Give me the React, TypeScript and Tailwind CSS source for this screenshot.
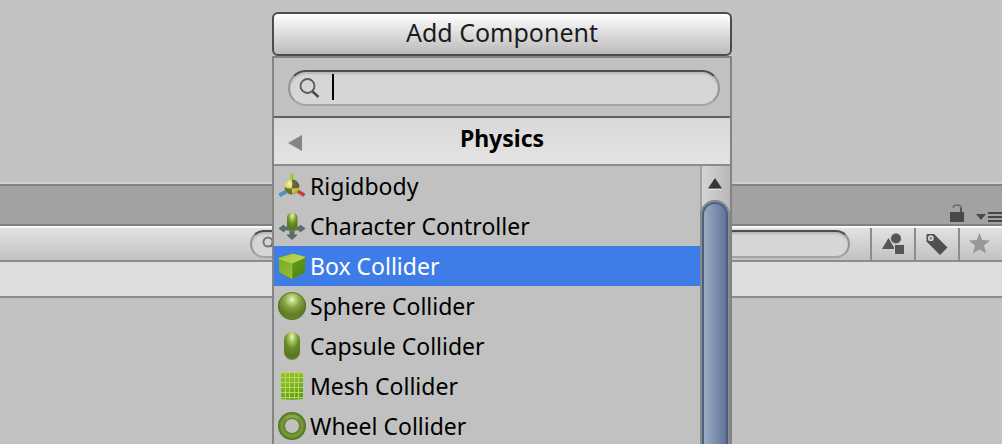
import { useState, type ReactNode } from "react";

function Gradients() {
  return (
    <svg className="absolute size-0" aria-hidden="true">
      <defs>
        <radialGradient id="ball" cx="0.5" cy="0.27" r="0.75">
          <stop offset="0" stopColor="#f4f9d8" />
          <stop offset="0.14" stopColor="#c3d68c" />
          <stop offset="0.4" stopColor="#84a23e" />
          <stop offset="0.75" stopColor="#5d7a28" />
          <stop offset="1" stopColor="#6c9030" />
        </radialGradient>
        <radialGradient id="pill" cx="0.5" cy="0.17" r="0.85">
          <stop offset="0" stopColor="#eef7c4" />
          <stop offset="0.25" stopColor="#a3c153" />
          <stop offset="0.5" stopColor="#6b8c2b" />
          <stop offset="0.85" stopColor="#55751f" />
          <stop offset="1" stopColor="#74993a" />
        </radialGradient>
        <linearGradient id="mesh" x1="0" y1="0" x2="0.4" y2="1">
          <stop offset="0" stopColor="#93c02e" />
          <stop offset="0.5" stopColor="#85b62c" />
          <stop offset="1" stopColor="#63a01f" />
        </linearGradient>
        <radialGradient id="ring" gradientUnits="userSpaceOnUse" cx="14" cy="14" r="14">
          <stop offset="0.5" stopColor="#5f7b28" />
          <stop offset="0.72" stopColor="#7a9c3e" />
          <stop offset="0.9" stopColor="#5f8128" />
          <stop offset="1" stopColor="#4f701f" />
        </radialGradient>
        <linearGradient id="cubeTop" x1="0" y1="0" x2="1" y2="0.4">
          <stop offset="0" stopColor="#9dc43c" />
          <stop offset="1" stopColor="#bcd75a" />
        </linearGradient>
        <linearGradient id="cubeLeft" x1="0" y1="0" x2="1" y2="1">
          <stop offset="0" stopColor="#79aa26" />
          <stop offset="1" stopColor="#93bf33" />
        </linearGradient>
        <linearGradient id="cubeRight" x1="0" y1="0" x2="0.6" y2="1">
          <stop offset="0" stopColor="#6b9e20" />
          <stop offset="1" stopColor="#4b8410" />
        </linearGradient>
        <radialGradient id="gloss" cx="0.35" cy="0.3" r="0.8">
          <stop offset="0" stopColor="#ffffff" stopOpacity="0.7" />
          <stop offset="0.35" stopColor="#ffffff" stopOpacity="0.1" />
          <stop offset="1" stopColor="#000000" stopOpacity="0.3" />
        </radialGradient>
      </defs>
    </svg>
  );
}

function Glyph({ children }: { children: ReactNode }) {
  return (
    <svg className="size-7 shrink-0" viewBox="0 0 28 28" aria-hidden="true">
      {children}
    </svg>
  );
}

const RigidbodyIcon = () => (
  <Glyph>
    <path d="M14 1.500v8" stroke="#8ed11f" strokeWidth="3" />
    <path d="M9 19l-7.500 4.500" stroke="#7d8b93" strokeWidth="4" />
    <path d="M9 18.500l-7.500 4.500" stroke="#2d9be0" strokeWidth="2.500" />
    <path d="M19 19l7.500 4.500" stroke="#93807f" strokeWidth="4" />
    <path d="M19 18.500l7.500 4.500" stroke="#df2a35" strokeWidth="2.500" />
    <circle cx="14" cy="15" r="7.500" fill="#dcd23c" />
    <path d="M14 16.500V7.500a7.500 7.500 0 0 1 7.500 7.500q-3 1.600-7.500 1.500z" fill="#57511f" />
    <path d="M14 16.500v6A7.500 7.500 0 0 1 6.500 15q3 1.600 7.500 1.500z" fill="#6b6420" />
    <circle cx="14" cy="15" r="7.500" fill="url(#gloss)" />
  </Glyph>
);

const CharacterIcon = () => (
  <Glyph>
    <path
      d="M1 16.500l5-3.500v2h4.500l2 1h3l2-1H22v-2l5 3.500-5 3.500v-2h-4.500l-1.500 1.500V23h3l-5 4.500L9 23h3v-3.500L10.500 18H6v2z"
      fill="#5d6d74"
      stroke="#4c5a61"
      strokeWidth="0.800"
      strokeLinejoin="round"
    />
    <rect x="9" y="0.500" width="10.500" height="19" rx="5.200" fill="url(#pill)" />
  </Glyph>
);

const BoxIcon = () => (
  <Glyph>
    <path d="M.5 5.500L15 1.500 27.500 5l-1 15.500L14 27.500 1.500 21z" fill="#5b921a" />
    <path d="M.5 6L15 1.500 27.500 5 14 11z" fill="url(#cubeTop)" />
    <path d="M.5 6L14 11v16L1.500 20.500z" fill="url(#cubeLeft)" />
    <path d="M27.500 5L14 11v16l12.500-6.500z" fill="url(#cubeRight)" />
    <path d="M1 6.200L14 11l13-5.700" fill="none" stroke="#bddb58" strokeWidth="1" />
    <path d="M14 11v15.500" stroke="#a9cb4a" strokeWidth="0.800" strokeOpacity="0.600" />
  </Glyph>
);

const SphereIcon = () => (
  <Glyph>
    <circle cx="14" cy="14" r="14" fill="url(#ball)" />
    <circle cx="14" cy="14" r="13.500" fill="none" stroke="#4a671a" strokeOpacity="0.600" />
  </Glyph>
);

const CapsuleIcon = () => (
  <Glyph>
    <rect x="6" y="0" width="16" height="28" rx="8" fill="url(#pill)" />
  </Glyph>
);

const MeshIcon = () => (
  <Glyph>
    <path d="M3 .8q11-1.600 22 0V27q-11 1.600-22 0z" fill="url(#mesh)" />
    <path
      d="M3 5.500h22M3 10.500h22M3 15.500h22M3 20.500h22M3 25.500h22M7.500 1v26M11.500 1v26M16.500 1v26M20.500 1v26"
      stroke="#b4da58"
      strokeWidth="1"
    />
    <path d="M3 1.100q11-1.600 22 0" fill="none" stroke="#c3e04c" />
  </Glyph>
);

const WheelIcon = () => (
  <Glyph>
    <circle cx="14" cy="14" r="10.500" fill="none" stroke="url(#ring)" strokeWidth="7" />
    <path d="M8 6.500a9.500 9.500 0 0 1 12 0" fill="none" stroke="#92c244" strokeWidth="3" strokeOpacity="0.500" />
  </Glyph>
);

const components = [
  { name: "Rigidbody", Icon: RigidbodyIcon },
  { name: "Character Controller", Icon: CharacterIcon },
  { name: "Box Collider", Icon: BoxIcon },
  { name: "Sphere Collider", Icon: SphereIcon },
  { name: "Capsule Collider", Icon: CapsuleIcon },
  { name: "Mesh Collider", Icon: MeshIcon },
  { name: "Wheel Collider", Icon: WheelIcon },
];

const fieldStyle =
  "flex items-center rounded-full border-2 border-x-[#969696] border-t-[#4e4e4e] border-b-[#a4a4a4] bg-[#d6d6d6] shadow-[inset_0_2px_2px_#b8b8b8]";

function ProjectPanel() {
  return (
    <section className="pt-[182px]" aria-label="Project">
      <div className="h-11 border-t-2 border-[#cfcfcf]">
        <div className="flex h-[42px] items-end justify-end border-y-2 border-[#828282] bg-[#a2a2a2] pb-0.5">
          <button type="button" aria-label="Lock" className="mr-3">
            <svg className="h-[18px] w-3.5" viewBox="0 0 14 18" aria-hidden="true">
              <path d="M0 8h14v10H0z" fill="#494949" />
              <path d="M11 8V4" stroke="#555" strokeWidth="2" />
              <path d="M3 3.500Q3.500 1 7 1t4.500 3" fill="none" stroke="#6a6a6a" strokeWidth="1.600" />
            </svg>
          </button>
          <button type="button" aria-label="Panel menu">
            <svg className="h-2.5 w-[26px]" viewBox="0 0 26 10" aria-hidden="true">
              <path d="M0 2h10L5 8z" fill="#494949" />
              <path d="M12 0h14v2H12zM12 4h14v2H12zM12 8h14v2H12z" fill="#464646" />
            </svg>
          </button>
        </div>
      </div>
      <div className="flex h-9 border-t-2 border-b-2 border-t-[#fafafa] border-b-[#8c8c8c] bg-linear-to-b from-[#e2e2e2] to-[#c2c2c2]">
        <div className="flex flex-1 items-center pr-5 pl-[250px]">
          <label className={`${fieldStyle} h-7 w-full pl-2.5`}>
            <svg className="size-4" viewBox="0 0 16 16" aria-hidden="true">
              <circle cx="6" cy="6" r="4.500" fill="none" stroke="#777" strokeWidth="2" />
              <path d="M9 9l5 5" stroke="#666" strokeWidth="2" />
            </svg>
            <input aria-label="Search assets" className="min-w-0 flex-1 bg-transparent outline-none" />
          </label>
        </div>
        <button type="button" aria-label="Search by type" className="flex w-11 items-center justify-center border-l-2 border-[#8c8c8c]">
          <svg className="size-6" viewBox="0 0 24 24" aria-hidden="true">
            <path d="M1 17L7.500 6 14 17z" fill="#575757" />
            <circle cx="15" cy="6.500" r="5.800" fill="#cfcfcf" />
            <circle cx="15" cy="6.500" r="5" fill="#555" />
            <path d="M13 12h10v10H13z" fill="#cfcfcf" />
            <path d="M14 13h9v9h-9z" fill="#555" />
          </svg>
        </button>
        <button type="button" aria-label="Search by label" className="flex w-11 items-center justify-center border-l-2 border-[#8c8c8c]">
          <svg className="size-6" viewBox="0 0 24 24" aria-hidden="true">
            <path d="M1.500 3q0-1 1-1H9l13.500 13.500-7.500 7.500L1.500 9.500z" fill="#505050" />
            <circle cx="5.800" cy="6.200" r="2.200" fill="#8a8a8a" stroke="#dedede" strokeWidth="1.400" />
          </svg>
        </button>
        <button type="button" aria-label="Favorites" className="flex w-11 items-center justify-center border-l-2 border-[#8c8c8c] pr-1">
          <svg className="size-6" viewBox="0 0 24 24" aria-hidden="true">
            <path d="M12.500 1l2.700 7 7.800.5-6 5 2.200 8-6.700-4-6.700 4 2.200-8-6-5 7.800-.5z" fill="#989898" />
          </svg>
        </button>
      </div>
      <div className="h-9 border-b-2 border-[#8c8c8c] bg-[#dedede]" />
    </section>
  );
}

function AddComponentMenu() {
  const [selected, setSelected] = useState("Box Collider");
  const [query, setQuery] = useState("");
  return (
    <div className="absolute inset-0 ml-0.5 flex justify-center pt-3">
      <div className="flex w-[460px] flex-col">
        <button
          type="button"
          className="h-11 shrink-0 rounded-md border-2 border-[#4c4c4c] bg-linear-to-b from-white to-[#bcbabb] pb-1 text-[25px] leading-8 text-[#1c1c1c]"
        >
          Add Component
        </button>
        <div className="flex min-h-0 flex-1 flex-col border-2 border-b-0 border-[#848484] bg-[#c1c1c1]">
          <div className="border-b-2 border-[#606060] px-3.5 pt-3 pr-2.5 pb-2.5">
            <label className={`${fieldStyle} h-9 pl-2`}>
              <svg className="size-[22px]" viewBox="0 0 22 22" aria-hidden="true">
                <circle cx="9.500" cy="9" r="7" fill="none" stroke="#5a5a5a" strokeWidth="1.800" />
                <path d="M14.500 14.500l6 5.500" stroke="#4a4a4a" strokeWidth="2.400" />
              </svg>
              <span className="mb-0.5 ml-3 h-[26px] w-0.5 bg-black" />
              <input
                aria-label="Search components"
                value={query}
                onChange={(e) => setQuery(e.target.value)}
                className="min-w-0 flex-1 bg-transparent pr-4 text-[23px] outline-none"
              />
            </label>
          </div>
          <div className="flex h-12 shrink-0 items-center border-b-2 border-[#8c8c8c] bg-linear-to-b from-[#d8d8d8] to-[#e4e4e4] px-3.5">
            <button type="button" aria-label="Back" className="w-4 pt-1">
              <svg className="h-4 w-3.5" viewBox="0 0 14 16" aria-hidden="true">
                <path d="M0 8L14 0v16z" fill="#858585" />
              </svg>
            </button>
            <h2 className="flex-1 pr-4 pb-1.5 text-center text-[23px] leading-8 font-bold text-black">Physics</h2>
          </div>
          <div className="flex min-h-0 flex-1 overflow-hidden">
            <ul className="min-w-0 flex-1">
              {components.map(({ name, Icon }) => (
                <li key={name}>
                  <button
                    type="button"
                    onClick={() => setSelected(name)}
                    className={`flex h-10 w-full items-center gap-1 pl-1 text-left text-[23px] leading-8 ${
                      selected === name ? "bg-[#3e7de7] text-white" : "text-black"
                    }`}
                  >
                    <Icon />
                    {name}
                  </button>
                </li>
              ))}
            </ul>
            <div className="flex w-[30px] flex-col border-l-2 border-[#a0a0a0] bg-linear-to-r from-[#d4d4d4] to-[#b8b8b8] pt-0.5">
              <button type="button" aria-label="Scroll up" className="flex h-8 shrink-0 items-center justify-center pr-0.5">
                <svg className="h-3 w-3.5" viewBox="0 0 14 12" aria-hidden="true">
                  <path d="M0 11h14v1H0z" fill="#e2e2e2" />
                  <path d="M7 0l7 10.500H0z" fill="#373737" />
                </svg>
              </button>
              <div className="-ml-0.5 flex min-h-0 flex-1 rounded-t-full border-x border-t border-[#858585] bg-[#8f8f8f] px-px pt-px">
                <div className="flex-1 rounded-t-full border-2 border-b-0 border-[#4b6080] bg-linear-to-r from-[#9babc4] to-[#61759a]" />
              </div>
            </div>
          </div>
        </div>
      </div>
    </div>
  );
}

export default function App() {
  return (
    <main className="relative h-screen overflow-hidden bg-[#c2c2c2] font-['Noto_Sans',sans-serif]">
      <Gradients />
      <ProjectPanel />
      <AddComponentMenu />
    </main>
  );
}
